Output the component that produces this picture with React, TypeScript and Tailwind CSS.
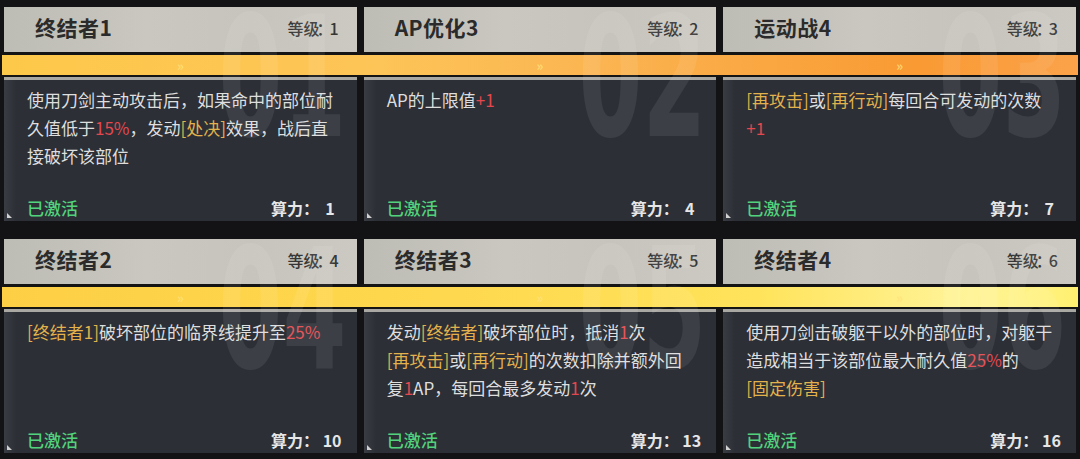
import React from "react";

type Seg = [string, "n" | "r" | "y"];
type Card = { title: string; level: number; num: string; power: number; lines: Seg[][] };

const rows: Card[][] = [
  [
    {
      title: "终结者1",
      level: 1,
      num: "01",
      power: 1,
      lines: [
        [["使用刀剑主动攻击后，如果命中的部位耐", "n"]],
        [["久值低于", "n"], ["15%", "r"], ["，发动", "n"], ["[处决]", "y"], ["效果，战后直", "n"]],
        [["接破坏该部位", "n"]],
      ],
    },
    {
      title: "AP优化3",
      level: 2,
      num: "02",
      power: 4,
      lines: [[["AP的上限值", "n"], ["+1", "r"]]],
    },
    {
      title: "运动战4",
      level: 3,
      num: "03",
      power: 7,
      lines: [
        [["[再攻击]", "y"], ["或", "n"], ["[再行动]", "y"], ["每回合可发动的次数", "n"]],
        [["+1", "r"]],
      ],
    },
  ],
  [
    {
      title: "终结者2",
      level: 4,
      num: "04",
      power: 10,
      lines: [[["[终结者1]", "y"], ["破坏部位的临界线提升至", "n"], ["25%", "r"]]],
    },
    {
      title: "终结者3",
      level: 5,
      num: "05",
      power: 13,
      lines: [
        [["发动", "n"], ["[终结者]", "y"], ["破坏部位时，抵消", "n"], ["1", "r"], ["次", "n"]],
        [["[再攻击]", "y"], ["或", "n"], ["[再行动]", "y"], ["的次数扣除并额外回", "n"]],
        [["复", "n"], ["1", "r"], ["AP，每回合最多发动", "n"], ["1", "r"], ["次", "n"]],
      ],
    },
    {
      title: "终结者4",
      level: 6,
      num: "06",
      power: 16,
      lines: [
        [["使用刀剑击破躯干以外的部位时，对躯干", "n"]],
        [["造成相当于该部位最大耐久值", "n"], ["25%", "r"], ["的", "n"]],
        [["[固定伤害]", "y"]],
      ],
    },
  ],
];

const cls = { n: "text-[#dedede]", r: "text-[#e2484e]", y: "text-[#e3b24c]" };

function CardView({ c }: { c: Card }) {
  return (
    <div className="relative flex flex-col overflow-hidden">
      <div className="flex h-[45px] items-center justify-between bg-[linear-gradient(90deg,#bdbcb5_0%,#c9c7bf_40%,#c6c4bc_70%,#cbc9c1_100%)] pb-[4px] pl-[31px] pr-[18px]">
        <span className="text-[21px] font-bold tracking-[0.5px] text-[#2b2b2b]">{c.title}</span>
        <span className="text-[16px] font-medium text-[#363636]">
          等级<span className="mx-[-3px]">：</span>
          {c.level}
        </span>
      </div>
      <div className="h-[28px] bg-[#a9a8a3]" />
      <div className="relative flex h-[141px] flex-col bg-[linear-gradient(90deg,#393c42_0px,#2c2f36_12px,#2c2f36_100%)] pl-[23px] pr-[22px] pt-[6px]">
        <div className="text-[17px] leading-[28px]">
          {c.lines.map((l, i) => (
            <div key={i} className="whitespace-nowrap">
              {l.map(([t, k], j) => (
                <span key={j} className={cls[k]}>
                  {t}
                </span>
              ))}
            </div>
          ))}
        </div>
        <div className="mt-auto mb-[1px] flex h-[24px] items-center justify-between">
          <span className="text-[17px] font-medium text-[#52d27c]">已激活</span>
          <span className="text-[16px] font-bold text-[#e6e6e6]">
            算力： <span className="inline-block w-[12px] text-right">{c.power}</span>
          </span>
        </div>
        <div className="absolute bottom-[3px] left-[3px] h-0 w-0 border-l-[5px] border-t-[5px] border-l-[#d0d0d0] border-t-transparent" />
      </div>
      <div
        className="pointer-events-none absolute right-[10px] top-[-12px] z-20 origin-right scale-x-[0.55] text-[167px] font-bold leading-none text-white/[0.08]"
        style={{ fontFamily: '"DejaVu Sans", sans-serif' }}
      >
        {c.num}
      </div>
    </div>
  );
}

export default function App() {
  return (
    <div
      className="h-[459px] w-[1080px] overflow-hidden bg-[#131316] pt-[7px]"
      style={{ fontFamily: '"Noto Sans CJK SC", "Noto Sans", sans-serif' }}
    >
      <div className="flex flex-col gap-[18px]">
        {rows.map((row, ri) => (
          <div key={ri} className="relative px-[4px]">
            <div className="grid grid-cols-3 gap-[7px]">
              {row.map((c) => (
                <CardView key={c.num} c={c} />
              ))}
            </div>
            <div
              className={
                "absolute left-[2px] right-[2px] top-[45px] z-10 grid h-[25px] grid-cols-3 gap-[7px] border-b-[2px] border-t-[3px] border-[#141414] px-[2px] " +
                (ri === 0
                  ? "bg-[linear-gradient(90deg,#fdc94a_0%,#fdc457_35%,#fbb552_55%,#f99a33_85%,#fba24a_100%)]"
                  : "bg-[linear-gradient(90deg,#fdcf45_0%,#fed84e_40%,#ffe35a_70%,#fff49a_90%,#fff070_100%)]")
              }
            >
              {[0, 1, 2].map((i) => (
                <div key={i} className="flex items-center justify-center text-[13px] font-bold leading-none text-[#ffe27a]/80">
                  »
                </div>
              ))}
            </div>
          </div>
        ))}
      </div>
    </div>
  );
}
